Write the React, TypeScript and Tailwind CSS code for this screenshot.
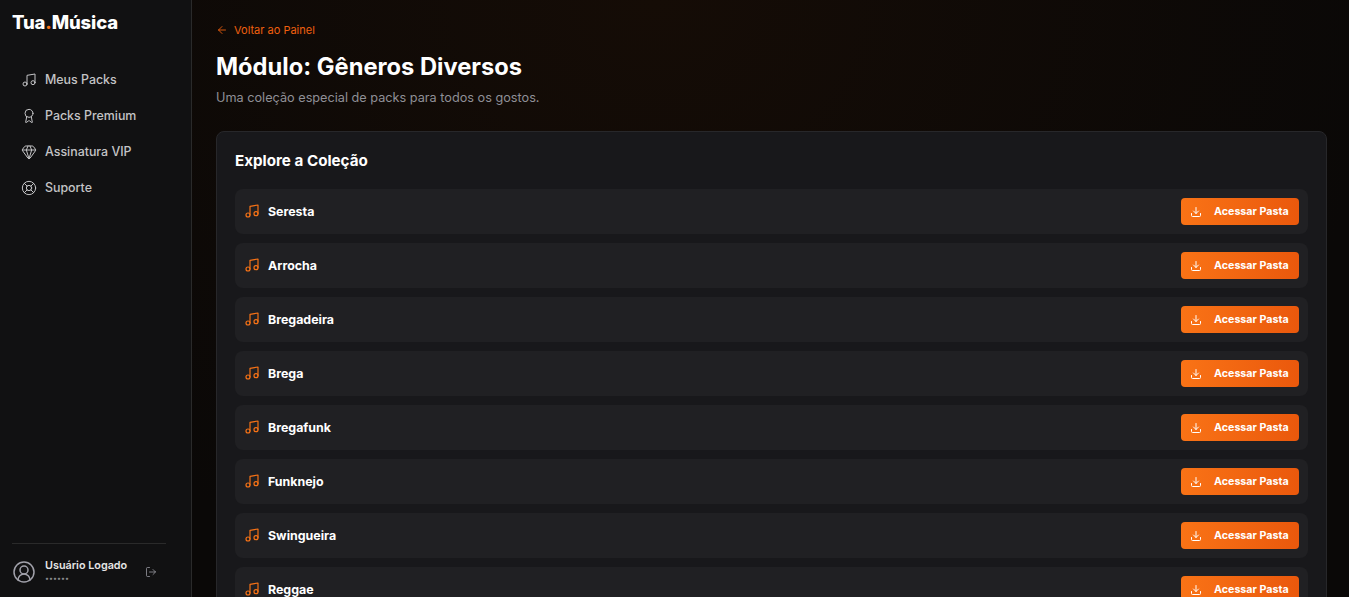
import { ArrowLeft, Download, Gem, LifeBuoy, LogOut, Music, Award, CircleUserRound } from "lucide-react";

const body = { fontFamily: "Inter, 'Open Sans', sans-serif" };

const navItems = [
  { label: "Meus Packs", icon: Music },
  { label: "Packs Premium", icon: Award },
  { label: "Assinatura VIP", icon: Gem },
  { label: "Suporte", icon: LifeBuoy },
];

const genres = ["Seresta", "Arrocha", "Bregadeira", "Brega", "Bregafunk", "Funknejo", "Swingueira", "Reggae"];

export default function App() {
  return (
    <div className="flex h-[597px] overflow-hidden bg-[#0a0807]" style={body}>
      {/* Sidebar */}
      <aside className="flex w-[192px] shrink-0 flex-col border-r border-[#2a2a2a] bg-[#111112] pb-[12px]">
        <div className="pl-3 pt-[9px] text-[18.5px] leading-[26px] font-extrabold tracking-[-0.15px] text-white">
          Tua<span className="text-[#f97316]">.</span>Música
        </div>

        <nav className="mt-[31px] flex flex-col gap-[8px] pl-[21px]">
          {navItems.map((item) => (
            <a key={item.label} className="flex h-[28px] items-center gap-[8px] text-[12.4px] font-medium text-[#c4c4c6]">
              <item.icon size={16} strokeWidth={1.5} />
              {item.label}
            </a>
          ))}
        </nav>

        <div className="mx-3 mt-auto flex w-[154px] items-center border-t border-[#2a2a2a] pt-[15px]">
          <CircleUserRound size={24} strokeWidth={1.5} className="text-[#a1a1aa]" />
          <div className="ml-[9px] w-[100px]">
            <p className="text-[10.8px] leading-[14px] font-semibold text-[#e5e5e5]">Usuário Logado</p>
            <p className="text-[7.5px] leading-[12px] font-medium text-[#8a8a8e]">••••••</p>
          </div>
          <LogOut size={12} strokeWidth={1.5} className="text-[#a1a1aa]" />
        </div>
      </aside>

      {/* Main */}
      <main className="flex-1 bg-[radial-gradient(ellipse_at_40%_0%,#150c06_0%,#0a0807_75%)] pl-6 pr-[22px] pt-[22px]">
        <a className="flex items-center gap-[6px] text-[11px] leading-[16px] text-[#f0600f]">
          <ArrowLeft size={12} strokeWidth={1.75} />
          Voltar ao Painel
        </a>
        <h1 className="mt-[12px] text-[23.7px] leading-[34px] font-bold text-white">Módulo: Gêneros Diversos</h1>
        <p className="mt-[5px] text-[12.7px] leading-[18px] text-[#8f8f96]">Uma coleção especial de packs para todos os gostos.</p>

        <section className="mt-[24px] rounded-lg border border-[#27272a] bg-[#18181b] px-[18px] pt-[18px]">
          <h2 className="text-[15.2px] leading-[22px] font-bold text-white">Explore a Coleção</h2>
          <div className="mt-[17px] flex flex-col gap-[9px]">
            {genres.map((g) => (
              <div key={g} className="flex h-[45px] items-center justify-between rounded-lg bg-[#202023] pl-[9px] pr-[9px]">
                <div className="flex items-center gap-[8px]">
                  <Music size={16} strokeWidth={1.75} className="text-[#f97316]" />
                  <span className="pt-[1px] text-[12.4px] font-bold text-white">{g}</span>
                </div>
                <button className="flex h-[27px] w-[118px] items-center rounded bg-gradient-to-r from-[#f97316] to-[#ea580c] pl-[9px] text-[10.7px] font-bold text-white">
                  <Download size={12} strokeWidth={2} />
                  <span className="ml-[12px] pt-[1px]">Acessar Pasta</span>
                </button>
              </div>
            ))}
          </div>
        </section>
      </main>
    </div>
  );
}
